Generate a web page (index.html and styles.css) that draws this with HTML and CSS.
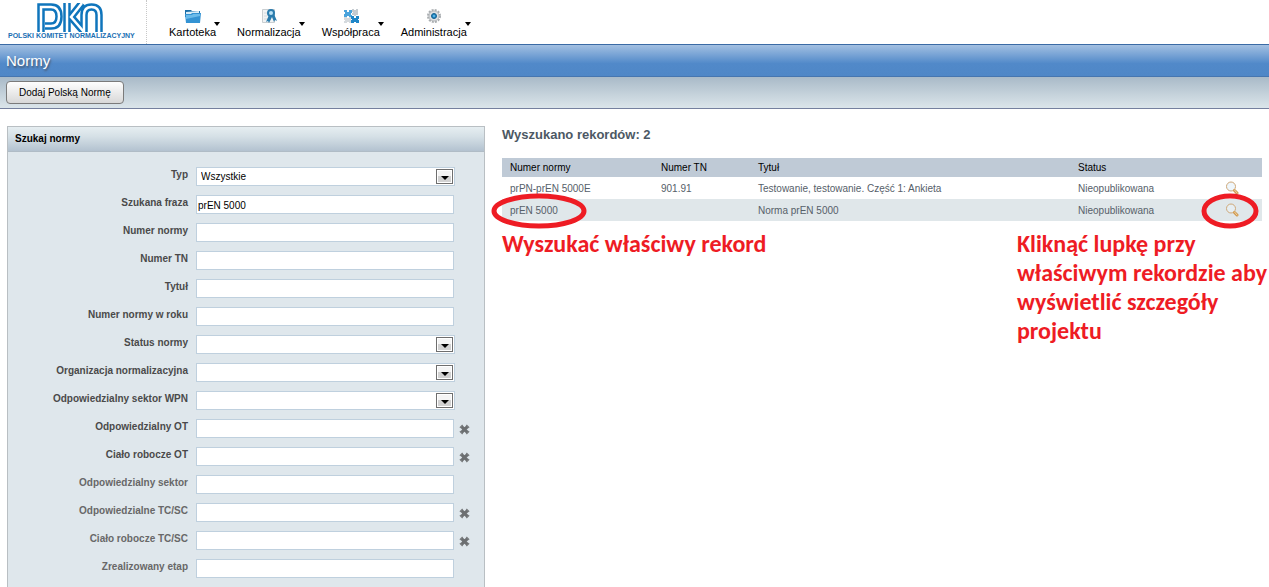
FILE: index.html
```html
<!DOCTYPE html>
<html lang="pl">
<head>
<meta charset="utf-8">
<title>Normy</title>
<link rel="stylesheet" href="styles.css">
</head>
<body>
<div class="app">
  <header class="top">
    <div class="brand">
      <svg class="logo" viewBox="0 0 66 29" aria-hidden="true">
        <g fill="none" stroke="#0f75bc" stroke-width="7.500">
          <path d="M4 29V4H14Q22 4 22 13.500Q22 23 14 23H8"/>
          <path d="M30 0V29"/>
          <path d="M45 0L34 14L47 29"/>
          <path d="M47 29V12Q47 4 54.500 4Q62 4 62 12V29"/>
        </g>
        <g fill="none" stroke="#fff" stroke-width="2.500">
          <path d="M4 29V4H14Q22 4 22 13.500Q22 23 14 23H8"/>
          <path d="M30 0V29"/>
          <path d="M45 0L34 14L47 29"/>
          <path d="M47 29V12Q47 4 54.500 4Q62 4 62 12V29"/>
        </g>
      </svg>
      <span class="brand-name">POLSKI KOMITET NORMALIZACYJNY</span>
    </div>
    <nav class="menu">
      <button class="menu-item" type="button">
        <svg class="menu-icon" viewBox="0 0 16 16" aria-hidden="true"><path d="M0 2h6l1 1h8v6H0z" fill="#1c6fa8"/><path d="M1 4l13-1v4H1z" fill="#d9ecf7"/><path d="M0 6h6l1-1h9l-1 10H1z" fill="#3493d3"/><path d="M1 7h6l1-1h7v2L1 11z" fill="#6bbbea"/></svg>
        <span class="menu-label">Kartoteka</span>
      </button>
      <button class="menu-item" type="button">
        <svg class="menu-icon" viewBox="0 0 16 16" aria-hidden="true"><path d="M1.500 1.500h12v13h-12z" fill="#f1f3f4" stroke="#c9ced1"/><path d="M3 5h4M3 8h3M3 11h4" stroke="#d5d9dc"/><path d="M8 7L5 14l2-1 1 2 3-6 2 5 1-2 2 1-3-7z" fill="#2b7cad"/><circle cx="10" cy="5" r="3" fill="#b9e1f5" stroke="#2b7cad" stroke-width="2"/></svg>
        <span class="menu-label">Normalizacja</span>
      </button>
      <button class="menu-item" type="button">
        <svg class="menu-icon" viewBox="0 0 16 16" aria-hidden="true"><path d="M1 2h3v2h2V2h3v3h-1v2h1v2H6V8H4v1H1V6h1V4H1z" fill="#4aa3dc"/><path d="M9 1h2v1h2V1h2v6h-2v1h-2V7H9V5h1V4H9z" fill="#c5cbd0"/><path d="M1 9h3v1h2V9h2v6H6v-1H4v1H1v-2h1v-1H1z" fill="#d5dade"/><path d="M8 8h3v2h2V8h3v3h-1v1h1v3h-3v-1h-2v1H8v-3h1v-1H8z" fill="#1f86c8"/></svg>
        <span class="menu-label">Współpraca</span>
      </button>
      <button class="menu-item" type="button">
        <svg class="menu-icon" viewBox="0 0 16 16" aria-hidden="true"><circle cx="8" cy="8" r="6" fill="none" stroke="#a9adb0" stroke-width="2" stroke-dasharray="2 1.140"/><circle cx="8" cy="8" r="5" fill="#dfe1e3" stroke="#b3b7ba"/><circle cx="8" cy="8" r="2.500" fill="#2387c2" stroke="#15608f"/><circle cx="8" cy="8" r="1" fill="#69c0ee"/></svg>
        <span class="menu-label">Administracja</span>
      </button>
    </nav>
  </header>
  <h1 class="title">Normy</h1>
  <div class="toolbar"><button class="add" type="button">Dodaj Polską Normę</button></div>
  <main class="content">
    <form class="panel">
      <h2 class="panel-head">Szukaj normy</h2>
      <div class="fields">
        <div class="field"><label for="f1">Typ</label><span class="select"><select id="f1"><option>Wszystkie</option></select></span></div>
        <div class="field"><label for="f2">Szukana fraza</label><input id="f2" type="text" value="prEN 5000"></div>
        <div class="field"><label for="f3">Numer normy</label><input id="f3" type="text"></div>
        <div class="field"><label for="f4">Numer TN</label><input id="f4" type="text"></div>
        <div class="field"><label for="f5">Tytuł</label><input id="f5" type="text"></div>
        <div class="field"><label for="f6">Numer normy w roku</label><input id="f6" type="text"></div>
        <div class="field"><label for="f7">Status normy</label><span class="select"><select id="f7"><option></option></select></span></div>
        <div class="field"><label for="f8">Organizacja normalizacyjna</label><span class="select"><select id="f8"><option></option></select></span></div>
        <div class="field"><label for="f9">Odpowiedzialny sektor WPN</label><span class="select"><select id="f9"><option></option></select></span></div>
        <div class="field"><label for="f10">Odpowiedzialny OT</label><input id="f10" type="text"><button class="clear" type="button" aria-label="Wyczyść"><svg viewBox="0 0 12 12"><path d="M2.500 2.500l7 7M9.500 2.500l-7 7" stroke="#6c6f71" stroke-width="3.500"/><path d="M1 4l3-3M8 1l3 3M1 8l3 3M8 11l3-3" stroke="#7b7e80" stroke-width="1.500"/></svg></button></div>
        <div class="field"><label for="f11">Ciało robocze OT</label><input id="f11" type="text"><button class="clear" type="button" aria-label="Wyczyść"><svg viewBox="0 0 12 12"><path d="M2.500 2.500l7 7M9.500 2.500l-7 7" stroke="#6c6f71" stroke-width="3.500"/><path d="M1 4l3-3M8 1l3 3M1 8l3 3M8 11l3-3" stroke="#7b7e80" stroke-width="1.500"/></svg></button></div>
        <div class="field soft"><label for="f12">Odpowiedzialny sektor</label><input id="f12" type="text"></div>
        <div class="field soft"><label for="f13">Odpowiedzialne TC/SC</label><input id="f13" type="text"><button class="clear" type="button" aria-label="Wyczyść"><svg viewBox="0 0 12 12"><path d="M2.500 2.500l7 7M9.500 2.500l-7 7" stroke="#6c6f71" stroke-width="3.500"/><path d="M1 4l3-3M8 1l3 3M1 8l3 3M8 11l3-3" stroke="#7b7e80" stroke-width="1.500"/></svg></button></div>
        <div class="field soft"><label for="f14">Ciało robocze TC/SC</label><input id="f14" type="text"><button class="clear" type="button" aria-label="Wyczyść"><svg viewBox="0 0 12 12"><path d="M2.500 2.500l7 7M9.500 2.500l-7 7" stroke="#6c6f71" stroke-width="3.500"/><path d="M1 4l3-3M8 1l3 3M1 8l3 3M8 11l3-3" stroke="#7b7e80" stroke-width="1.500"/></svg></button></div>
        <div class="field soft"><label for="f15">Zrealizowany etap</label><input id="f15" type="text"></div>
      </div>
    </form>
    <section class="results">
      <h2 class="count">Wyszukano rekordów: 2</h2>
      <table class="records">
        <thead>
          <tr><th class="c-num">Numer normy</th><th class="c-tn">Numer TN</th><th class="c-title">Tytuł</th><th class="c-status">Status</th><th class="c-act"></th></tr>
        </thead>
        <tbody>
          <tr><td>prPN-prEN 5000E</td><td>901.91</td><td>Testowanie, testowanie. Część 1: Ankieta</td><td>Nieopublikowana</td>
            <td class="act"><button class="view" type="button" aria-label="Szczegóły"><svg viewBox="0 0 14 14"><circle cx="6" cy="5.500" r="4.500" fill="#eef6fc" stroke="#cfa878"/><path d="M9.500 9.500l2.500 2.500" stroke="#d09a50" stroke-width="3" stroke-linecap="round"/><path d="M9.500 9l2.500 3" stroke="#f0d3a4" stroke-linecap="round"/></svg></button></td></tr>
          <tr class="alt"><td class="marked">prEN 5000<svg class="ring ring-name" viewBox="0 0 96 36" aria-hidden="true"><ellipse cx="48" cy="18" rx="45" ry="15"/></svg></td><td></td><td>Norma prEN 5000</td><td>Nieopublikowana</td>
            <td class="act marked"><button class="view" type="button" aria-label="Szczegóły"><svg viewBox="0 0 14 14"><circle cx="6" cy="5.500" r="4.500" fill="#e6eef2" stroke="#cfa878"/><path d="M9.500 9.500l2.500 2.500" stroke="#d09a50" stroke-width="3" stroke-linecap="round"/><path d="M9.500 9l2.500 3" stroke="#f0d3a4" stroke-linecap="round"/></svg></button><svg class="ring ring-view" viewBox="0 0 58 36" aria-hidden="true"><ellipse cx="29" cy="18" rx="26" ry="15"/></svg></td></tr>
        </tbody>
      </table>
      <div class="notes">
        <p class="note">Wyszukać właściwy rekord</p>
        <p class="note">Kliknąć lupkę przy<br>właściwym rekordzie aby<br>wyświetlić szczegóły<br>projektu</p>
      </div>
    </section>
  </main>
</div>
</body>
</html>
```
FILE: styles.css
```css
*, *::before, *::after { box-sizing: border-box; }
body { margin: 0; background: #fff; color: #000; font: 10px/14px "Liberation Sans", Arial, sans-serif; }
h1, h2, p { margin: 0; }
button, input, select { font: inherit; color: inherit; }
.app { display: flex; flex-direction: column; min-height: 100vh; }

.top { display: flex; height: 44px; }
.brand { width: 147px; padding: 3px 0 0 8px; border-right: 1px dotted #c8c8c8; }
.logo { display: block; width: 66px; height: 29px; margin-left: 29px; }
.brand-name { display: block; color: #1a6fb3; font: bold 7px/8px "Liberation Sans", Arial, sans-serif; white-space: nowrap; }
.menu { display: flex; gap: 21px; padding-left: 22px; }
.menu-item { position: relative; display: flex; flex-direction: column; align-items: center; padding: 8px 0 0; border: 0; background: none; font-size: 11px; }
.menu-icon { width: 16px; height: 16px; }
.menu-label { margin-top: 1px; }
.menu-item::after { content: ""; position: absolute; right: -4px; top: 22px; border: 3px solid transparent; border-top: 4px solid #000; border-bottom: 0; }

.title { height: 33px; padding-left: 6px; border-top: 1px solid #3b6ba5; border-bottom: 1px solid #4676b0; background: linear-gradient(#a3c0e2, #5189c9 60%, #4f87c7); color: #fff; font-size: 15px; font-weight: normal; line-height: 32px; text-shadow: 1px 2px 2px #4a5a70; }
.toolbar { height: 32px; padding: 4px 6px; border-bottom: 1px solid #75809e; background: linear-gradient(#a9bac8, #dbe5ea); }
.add { display: block; height: 23px; padding: 0 12px; border: 1px solid #7b7b7b; border-radius: 4px; background: linear-gradient(#fefefe, #d8d8d8); line-height: 19px; }

.content { display: flex; flex: 1; gap: 17px; padding: 17px 7px 0; }
.panel { display: flex; flex-direction: column; flex: 0 0 478px; border: 1px solid #b9bfc3; border-bottom: 0; background: #dfe7ec; }
.panel-head { height: 25px; padding-left: 7px; border-bottom: 1px solid #b0bcc6; background: linear-gradient(#e6eef1, #d5e0e6 40%, #b3c2d0); font-size: 10px; line-height: 23px; }
.fields { display: flex; flex-direction: column; gap: 9px; padding-top: 15px; }
.field { display: flex; gap: 8px; height: 19px; }
.field label { width: 180px; color: #4a4a4a; font-weight: bold; line-height: 16px; text-align: right; }
.soft label { color: #686868; }
.field input { width: 258px; height: 19px; padding: 2px 1px 0; border: 1px solid #bfd0de; background: #fff; }
.select { position: relative; width: 259px; }
.select select { display: block; width: 100%; height: 19px; padding: 0 4px; border: 1px solid #bfd0de; border-radius: 0; background: #fff; appearance: none; }
.select::before { content: ""; position: absolute; right: 2px; top: 2px; width: 17px; height: 15px; border: 1px solid #6e6e6e; background: linear-gradient(#f4f4f4 45%, #d2d2d2 46%); box-shadow: inset 0 0 0 1px #fff; pointer-events: none; }
.select::after { content: ""; position: absolute; right: 6px; top: 9px; border: 4px solid transparent; border-top-color: #000; border-bottom: 0; pointer-events: none; }
.clear { width: 12px; height: 12px; margin: 4px 0 0 -3px; padding: 0; border: 0; background: none; }
.clear svg { display: block; width: 11px; height: 11px; fill: none; }

.results { flex: 1; min-width: 0; }
.count { color: #4c5864; font-size: 13px; line-height: 18px; }
.records { width: 100%; margin-top: 14px; border-collapse: collapse; table-layout: fixed; }
.records th { height: 19px; padding: 0 8px; background: #bfcad6; font-weight: normal; text-align: left; }
.records td { height: 22px; padding: 2px 8px 0; color: #566069; white-space: nowrap; }
.records .alt td { background: #e0e7ea; }
.c-num { width: 151px; }
.c-tn { width: 97px; }
.c-status { width: 131px; }
.c-act { width: 61px; }
.records .act { padding: 0; text-align: center; }
.view { width: 14px; height: 14px; padding: 0; border: 0; background: none; vertical-align: middle; }
.view svg { display: block; width: 14px; height: 14px; fill: none; }
.marked { position: relative; }
.ring { position: absolute; z-index: 1; height: 36px; fill: none; stroke: #ee1c24; stroke-width: 5; pointer-events: none; }
.ring-name { left: -11px; top: -6px; width: 96px; }
.ring-view { left: 0; top: -6px; width: 58px; }
.notes { display: flex; justify-content: space-between; margin-right: -5px; padding-top: 8px; }
.note { color: #ee1c24; font: bold 24px/29px Carlito, Lato, sans-serif; white-space: nowrap; }
```
